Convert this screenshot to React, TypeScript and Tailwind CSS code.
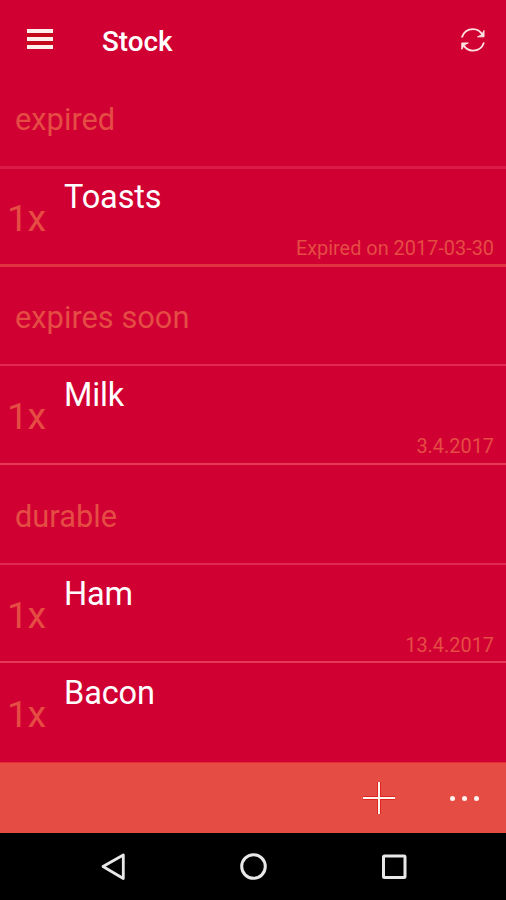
const rule: Record<string, string> = {
  faint: "border-b-3 border-[#da1b47]",
  warm: "border-b-3 border-[#e03440]",
  thin: "border-b-2 border-[#de2a50]",
  strong: "border-b-2 border-[#e43a56]",
  none: "",
};

function Section({ title, height, line }: { title: string; height: string; line: string }) {
  return (
    <div className={`shrink-0 pl-[15px] ${height} ${rule[line]}`}>
      <h2 className="text-[30.8px] leading-[36px] text-[#e54c44]">{title}</h2>
    </div>
  );
}

function Item({ name, note, height, line }: { name: string; note?: string; height: string; line: string }) {
  return (
    <div className={`flex shrink-0 ${height} ${rule[line]}`}>
      <div className="w-[64px] shrink-0 pl-[7px] pt-[18px] text-[37.5px] leading-[44px] tracking-[-0.5px] text-[#e54c44]">1x</div>
      <div className="flex min-w-0 grow flex-col pr-[12px]">
        <div className="text-[32.5px] leading-[38px] tracking-[-0.12px] text-white">{name}</div>
        {note && <div className="mt-[21px] text-right text-[19.9px] leading-[24px] text-[#e54c44]">{note}</div>}
      </div>
    </div>
  );
}

export default function App() {
  return (
    <div className="flex h-[900px] w-[506px] flex-col overflow-hidden bg-[#d10033] font-['Roboto',sans-serif]">
      <header className="flex h-[70px] shrink-0 items-start pl-[27px] pr-[20px]">
        <button aria-label="Menu" className="mt-[29px] flex w-[26px] flex-col gap-[4px] bg-[#c40a1c]">
          <span className="h-[4px] w-full bg-[#fff0ee]" />
          <span className="h-[4px] w-full bg-[#fff0ee]" />
          <span className="h-[4px] w-full bg-[#fff0ee]" />
        </button>
        <h1 className="ml-[49px] mt-[26px] text-[27.8px] font-medium leading-[32px] text-white">Stock</h1>
        <button aria-label="Refresh" className="ml-auto mt-[27px]">
          <svg width="26" height="26" viewBox="0 0 26 26" fill="none" stroke="#ffe3e3" strokeWidth="1.8">
            <path d="M1.800 10.500C3.500 5.500 7.800 2.200 13 2.200C17.500 2.200 20.500 4.500 22.500 8M24 15.500C22.300 20.500 18 23.600 13 23.600C8.500 23.600 5.300 21.300 3.400 17.800" />
            <path d="M24 3.500V9.800H17.500L21.500 8ZM1.800 22.300V16H8.300L4.300 17.800Z" fill="#ffe3e3" strokeWidth="1" />
          </svg>
        </button>
      </header>
      <main className="flex h-[692px] shrink-0 flex-col">
        <Section title="expired" height="h-[99px] pt-[32px]" line="faint" />
        <Item name="Toasts" note="Expired on 2017-03-30" height="h-[98px] pt-[9px]" line="warm" />
        <Section title="expires soon" height="h-[99px] pt-[33px]" line="thin" />
        <Item name="Milk" note="3.4.2017" height="h-[99px] pt-[10px]" line="strong" />
        <Section title="durable" height="h-[100px] pt-[34px]" line="thin" />
        <Item name="Ham" note="13.4.2017" height="h-[98px] pt-[10px]" line="strong" />
        <Item name="Bacon" height="h-[99px] pt-[11px]" line="none" />
      </main>
      <div className="flex h-[71px] shrink-0 items-center justify-end border-t border-[#e92b36] bg-[#e54c44] pr-[27px]">
        <button aria-label="Add">
          <svg width="34" height="34" viewBox="0 0 34 34" fill="none">
            <path d="M17 1V33M1 17H33" stroke="#df251f" strokeWidth="4" />
            <path d="M17 1V33M1 17H33" stroke="#fff3ef" strokeWidth="2" />
          </svg>
        </button>
        <button aria-label="More" className="ml-[54px] flex gap-[7px]">
          <span className="size-[5px] rounded-full bg-[#fff3ef]" />
          <span className="size-[5px] rounded-full bg-[#fff3ef]" />
          <span className="size-[5px] rounded-full bg-[#fff3ef]" />
        </button>
      </div>
      <nav className="flex h-[67px] shrink-0 items-center bg-black pl-[99px]">
        <svg width="310" height="32" viewBox="0 0 310 32" fill="none" stroke="#e8e8e8" strokeWidth="3" strokeLinejoin="round">
          <path d="M4 15.500L24.300 4V27.500Z" strokeWidth="2.800" />
          <circle cx="154.500" cy="15.500" r="11.800" />
          <rect x="284.500" y="5" width="21.500" height="21.500" rx="1" />
        </svg>
      </nav>
    </div>
  );
}
